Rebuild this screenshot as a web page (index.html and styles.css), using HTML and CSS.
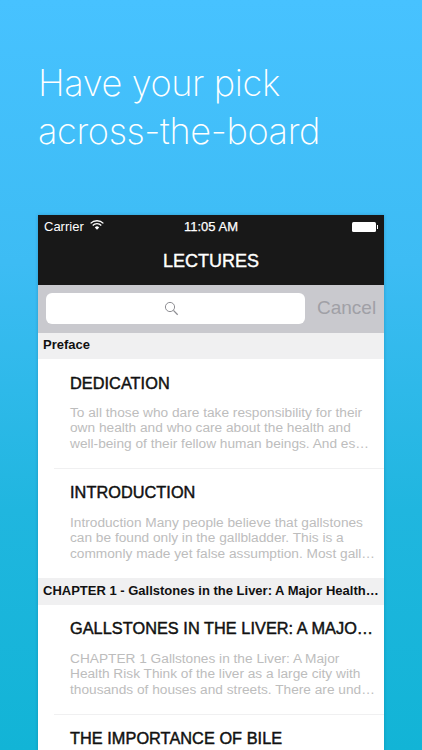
FILE: index.html
```html
<!DOCTYPE html>
<html lang="en">
<head>
<meta charset="utf-8">
<title>Lectures</title>
<link rel="stylesheet" href="styles.css">
</head>
<body>
<main class="page">
  <h1 class="headline">Have your pick<br>across-the-board</h1>
  <section class="phone">
    <header class="topbar">
      <div class="status">
        <div class="status-left">
          <span>Carrier</span>
          <svg class="wifi" viewBox="0 0 14 10" aria-hidden="true"><path d="M.6 3.4a9 9 0 0 1 12.8 0" fill="none" stroke="#fff" stroke-width="1.3"/><path d="M2.7 5.5a6 6 0 0 1 8.6 0" fill="none" stroke="#fff" stroke-width="1.3"/><path d="M4.8 7.5a3 3 0 0 1 4.4 0L7 9.8z" fill="#fff"/></svg>
        </div>
        <div class="clock">11:05 AM</div>
        <div class="status-right">
          <span class="battery"></span><span class="battery-tip"></span>
        </div>
      </div>
      <div class="title">LECTURES</div>
    </header>
    <div class="searchbar">
      <div class="field">
        <svg class="glass" viewBox="0 0 15 15" aria-hidden="true"><circle cx="6" cy="6" r="4.6" fill="none" stroke="#8e8e93" stroke-width="1"/><path d="M9.4 9.4l4.3 4.3" stroke="#8e8e93" stroke-width="1.3"/></svg>
      </div>
      <div class="cancel">Cancel</div>
    </div>
    <div class="section">Preface</div>
    <article class="row row-first">
      <h2 class="row-title">DEDICATION</h2>
      <p class="row-text">To all those who dare take responsibility for their<br>own health and who care about the health and<br>well-being of their fellow human beings. And es…</p>
    </article>
    <article class="row row-last">
      <h2 class="row-title">INTRODUCTION</h2>
      <p class="row-text">Introduction Many people believe that gallstones<br>can be found only in the gallbladder. This is a<br>commonly made yet false assumption. Most gall…</p>
    </article>
    <div class="section section-wide">CHAPTER 1 - Gallstones in the Liver: A Major Health…</div>
    <article class="row">
      <h2 class="row-title">GALLSTONES IN THE LIVER: A MAJO…</h2>
      <p class="row-text">CHAPTER 1 Gallstones in the Liver: A Major<br>Health Risk Think of the liver as a large city with<br>thousands of houses and streets. There are und…</p>
    </article>
    <article class="row row-end">
      <h2 class="row-title">THE IMPORTANCE OF BILE</h2>
    </article>
  </section>
</main>
</body>
</html>
```
FILE: styles.css
```css
* { box-sizing: border-box; }
html, body { margin: 0; height: 750px; overflow: hidden; }
.page {
  height: 750px;
  overflow: hidden;
  padding: 60px 38px 0;
  background: linear-gradient(180deg, #47c2ff 0%, #3dbcf4 35%, #20b6df 68%, #12b4d6 100%);
  font-family: "Liberation Sans", Arial, sans-serif;
}
.headline {
  margin: 0 0 60px;
  font-family: Inter, "Liberation Sans", sans-serif;
  font-weight: 200;
  font-size: 36.2px;
  line-height: 47.5px;
  letter-spacing: -0.4px;
  color: #fff;
}
.phone { width: 346px; background: #fff; box-shadow: 0 0 3px rgba(0, 60, 90, .25); }
.topbar { height: 70px; background: #181818; color: #fff; }
.status {
  display: grid;
  grid-template-columns: 1fr auto 1fr;
  align-items: center;
  height: 23px;
  padding: 0 6px;
  font-size: 13px;
}
.status-left { display: flex; align-items: center; gap: 6px; }
.wifi { width: 14px; height: 10px; margin-top: -3px; }
.clock { font-size: 13px; -webkit-text-stroke: .25px #fff; }
.status-right { display: flex; justify-content: flex-end; align-items: center; gap: 1px; }
.battery { width: 24px; height: 10px; background: #fff; border-radius: 1.5px; }
.battery-tip { width: 1.5px; height: 4px; background: #fff; }
.title { padding-top: 13px; text-align: center; font-size: 18px; font-weight: 400; -webkit-text-stroke: .4px #fff; line-height: 21px; }
.searchbar {
  display: flex;
  align-items: center;
  height: 48px;
  padding: 0 0 1px 8px;
  background: #c9c9ce;
}
.field {
  display: flex;
  align-items: center;
  justify-content: center;
  width: 259px;
  height: 31px;
  padding-right: 8px;
  border-radius: 6px;
  background: #fff;
}
.glass { width: 15px; height: 15px; }
.cancel { margin: 0 0 2px 12px; font-size: 19px; color: #a0a0a6; }
.section {
  height: 26px;
  padding-left: 5px;
  background: #f0f0f1;
  color: #111;
  font-size: 13px;
  font-weight: 700;
  line-height: 23px;
  white-space: nowrap;
  overflow: hidden;
}
.section-wide { height: 27px; line-height: 25px; }
.row { height: 110px; margin-left: 16px; padding: 14px 0 0 16px; border-bottom: 1px solid #f0f0f1; }
.row-first { padding-top: 15px; }
.row-first .row-title { margin-bottom: 12px; }
.row-last { height: 109px; border-bottom: none; }
.row-end { height: 36px; border-bottom: none; }
.row-title {
  margin: 0 0 13px;
  font-size: 16.3px;
  font-weight: 400;
  letter-spacing: .05px;
  -webkit-text-stroke: .45px #111;
  line-height: 19px;
  color: #111;
  white-space: nowrap;
}
.row-text {
  margin: 0;
  font-size: 13.7px;
  line-height: 15.3px;
  color: #bdbdbd;
  white-space: nowrap;
}
```
